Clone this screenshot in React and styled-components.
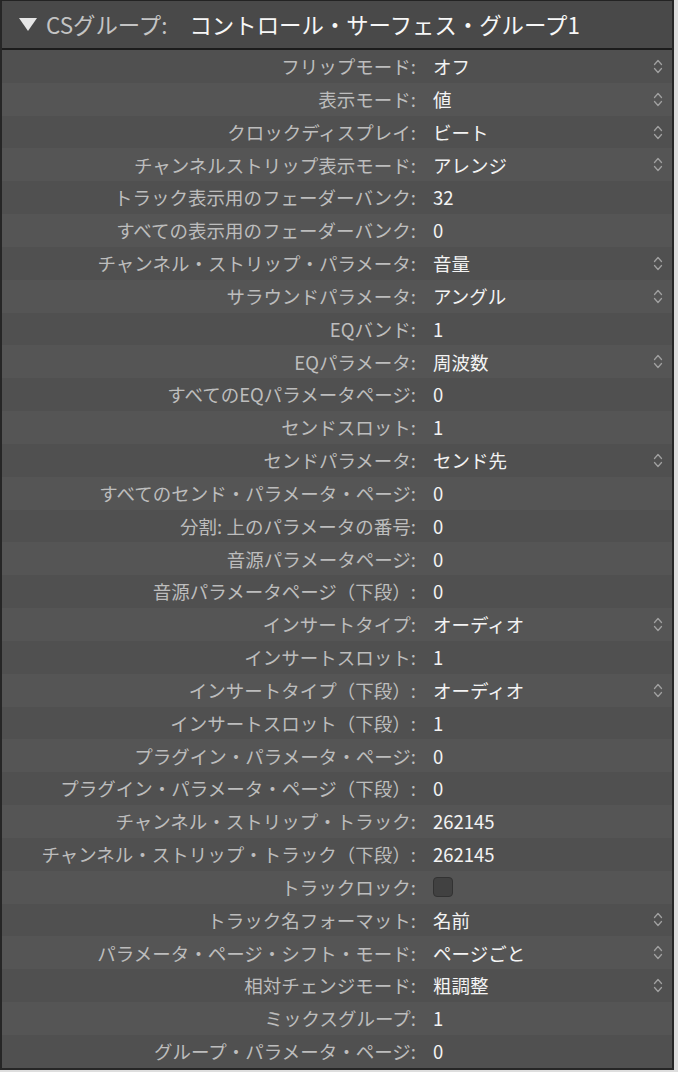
import React from "react";
import styled, { createGlobalStyle } from "styled-components";

const Global = createGlobalStyle`
  html, body { margin: 0; padding: 0; background: #dedede; }
  body { font-family: "Noto Sans CJK JP", "Noto Sans", sans-serif; }
`;

const Panel = styled.div`
  width: 674px;
  box-sizing: border-box;
  border-top: 1px solid #232323;
  border-left: 2px solid #262626;
  border-right: 2px solid #262626;
  border-bottom: 2px solid #262626;
  background: #4a4a4a;
`;

const Header = styled.div`
  height: 49px;
  box-sizing: border-box;
  border-bottom: 2px solid #1c1c1c;
  display: flex;
  align-items: center;
  padding-left: 17px;
  background: #494949;
  font-size: 22.4px;
  line-height: 1;
`;

const Triangle = styled.svg`
  width: 18px;
  height: 13px;
  margin-right: 9px;
  flex: none;
`;

const HeaderLabel = styled.span`
  color: #c4c4c4;
  margin-right: 22px;
`;

const HeaderValue = styled.span`
  color: #f7f7f7;
`;

const Rows = styled.div`
  display: flex;
  flex-direction: column;
`;

const Row = styled.div`
  height: 32.84px;
  display: grid;
  grid-template-columns: 414px 1fr auto;
  column-gap: 17px;
  align-items: center;
  background: ${(p) => (p.$alt ? "#555555" : "#505050")};
  font-size: 18.5px;
  line-height: 1;
`;

const Label = styled.div`
  text-align: right;
  color: #bdbdbd;
  white-space: nowrap;
`;

const Value = styled.div`
  color: #f3f3f3;
  white-space: nowrap;
`;

const Stepper = styled.svg`
  width: 10px;
  height: 17px;
  margin-right: 9px;
  display: block;
`;

const Blank = styled.span`
  width: 10px;
  margin-right: 9px;
`;

const Check = styled.div`
  width: 20px;
  height: 20px;
  box-sizing: border-box;
  border-radius: 4px;
  background: #414141;
  border: 1px solid #323232;
`;

const rows = [
  ["フリップモード:", "オフ", true],
  ["表示モード:", "値", true],
  ["クロックディスプレイ:", "ビート", true],
  ["チャンネルストリップ表示モード:", "アレンジ", true],
  ["トラック表示用のフェーダーバンク:", "32"],
  ["すべての表示用のフェーダーバンク:", "0"],
  ["チャンネル・ストリップ・パラメータ:", "音量", true],
  ["サラウンドパラメータ:", "アングル", true],
  ["EQバンド:", "1"],
  ["EQパラメータ:", "周波数", true],
  ["すべてのEQパラメータページ:", "0"],
  ["センドスロット:", "1"],
  ["センドパラメータ:", "センド先", true],
  ["すべてのセンド・パラメータ・ページ:", "0"],
  ["分割: 上のパラメータの番号:", "0"],
  ["音源パラメータページ:", "0"],
  ["音源パラメータページ（下段）:", "0"],
  ["インサートタイプ:", "オーディオ", true],
  ["インサートスロット:", "1"],
  ["インサートタイプ（下段）:", "オーディオ", true],
  ["インサートスロット（下段）:", "1"],
  ["プラグイン・パラメータ・ページ:", "0"],
  ["プラグイン・パラメータ・ページ（下段）:", "0"],
  ["チャンネル・ストリップ・トラック:", "262145"],
  ["チャンネル・ストリップ・トラック（下段）:", "262145"],
  ["トラックロック:", null, false, true],
  ["トラック名フォーマット:", "名前", true],
  ["パラメータ・ページ・シフト・モード:", "ページごと", true],
  ["相対チェンジモード:", "粗調整", true],
  ["ミックスグループ:", "1"],
  ["グループ・パラメータ・ページ:", "0"],
];

function StepperIcon() {
  return (
    <Stepper viewBox="0 0 10 17">
      <path
        d="M1.5 6.5 L5 2.5 L8.5 6.5 M1.5 10.5 L5 14.5 L8.5 10.5"
        fill="none"
        stroke="#a0a0a0"
        strokeWidth="1.3"
        strokeLinecap="round"
        strokeLinejoin="round"
      />
    </Stepper>
  );
}

export default function App() {
  return (
    <>
      <Global />
      <Panel>
        <Header>
          <Triangle viewBox="0 0 18 13">
            <polygon points="0,0 18,0 9,13" fill="#e6e6e6" />
          </Triangle>
          <HeaderLabel>CSグループ:</HeaderLabel>
          <HeaderValue>コントロール・サーフェス・グループ1</HeaderValue>
        </Header>
        <Rows>
          {rows.map(([label, value, popup, check], i) => (
            <Row key={i} $alt={i % 2 === 1}>
              <Label>{label}</Label>
              <Value>{check ? <Check /> : value}</Value>
              {popup ? <StepperIcon /> : <Blank />}
            </Row>
          ))}
        </Rows>
      </Panel>
    </>
  );
}
